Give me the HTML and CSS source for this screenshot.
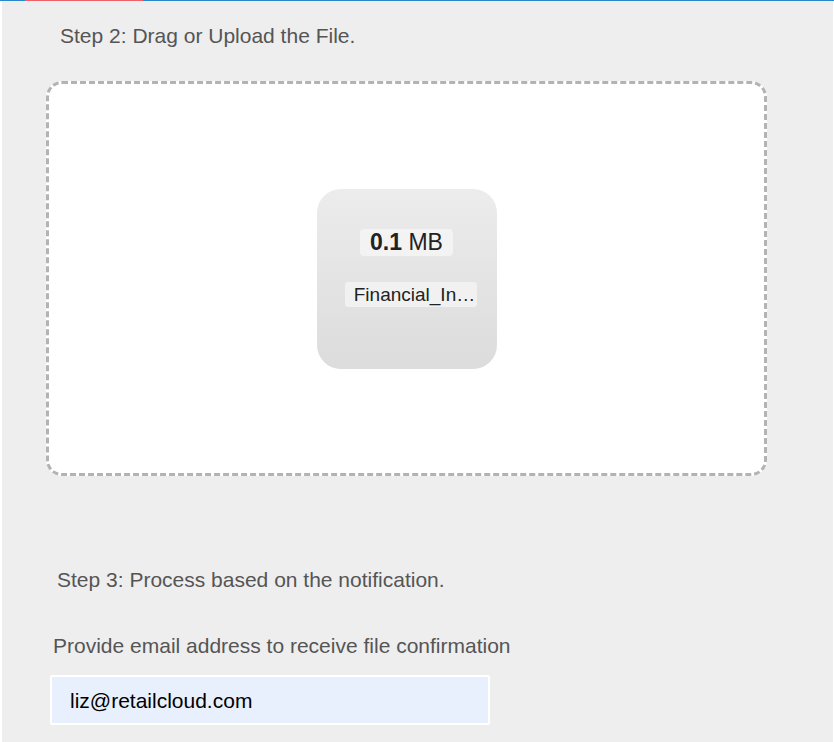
FILE: index.html
```html
<!DOCTYPE html>
<html lang="en">
<head>
  <meta charset="UTF-8">
  <meta name="viewport" content="width=device-width, initial-scale=1.0">
  <title>File Upload</title>
  <link rel="stylesheet" href="styles.css">
</head>
<body>
  <div class="progress">
    <div class="progress-step"></div>
  </div>
  <div class="panel">
    <p class="step-title step-2">Step 2: Drag or Upload the File.</p>
    <div class="dropzone">
      <div class="file-card">
        <span class="file-size"><b>0.1</b> MB</span>
        <span class="file-name">Financial_In…</span>
      </div>
    </div>
    <p class="step-title step-3">Step 3: Process based on the notification.</p>
    <label class="email-label" for="email">Provide email address to receive file confirmation</label>
    <input class="email-input" type="email" id="email" value="liz@retailcloud.com">
  </div>
</body>
</html>
```

FILE: styles.css
```css
body {
  font-family: "Liberation Sans", Arial, sans-serif;
  margin: 0;
  padding: 0;
  background-color: #fff;
}

.progress {
  height: 1px;
  background-color: #2a87c8;
  display: flex;
}

.progress-step {
  width: 118px;
  margin-left: 25px;
  background-color: #f0606a;
}

.panel {
  margin: 0 1px 0 2px;
  min-height: calc(100vh - 1px);
  background-color: #eeeeee;
  display: flex;
  flex-direction: column;
  align-items: flex-start;
  padding-top: 23px;
  box-sizing: border-box;
}

.step-title,
.email-label {
  font-size: 21px;
  line-height: 24px;
  color: #555;
  margin: 0;
}

.step-2 {
  margin-left: 58px;
}

.dropzone {
  width: 721px;
  height: 395px;
  margin: 33px 0 0 44px;
  border: 3px dashed #b3b3b3;
  border-radius: 16px;
  background-color: #fff;
  box-sizing: border-box;
  display: flex;
  align-items: center;
  justify-content: center;
}

.file-card {
  width: 180px;
  height: 180px;
  border-radius: 24px;
  background: linear-gradient(#ececec, #dcdcdc);
  display: flex;
  flex-direction: column;
  align-items: center;
  padding-top: 40px;
  gap: 26px;
  box-sizing: border-box;
  color: #222;
}

.file-size {
  font-size: 23px;
  line-height: 27px;
  padding: 0 10px;
  border-radius: 4px;
  background-color: #f3f3f3;
}

.file-name {
  font-size: 19px;
  line-height: 25px;
  padding: 0 2px 0 9px;
  margin-left: 9px;
  border-radius: 3px;
  background-color: #f1f1f1;
  white-space: nowrap;
}

.step-3 {
  margin: 92px 0 0 55px;
}

.email-label {
  margin: 42px 0 0 51px;
}

.email-input {
  margin: 17px 0 0 48px;
  width: 440px;
  height: 50px;
  box-sizing: border-box;
  border: 2px solid #fff;
  border-radius: 2px;
  padding: 2px 18px 0;
  background-color: #e8f0fe;
  font-family: inherit;
  font-size: 21px;
  color: #000;
  outline: none;
}
```
